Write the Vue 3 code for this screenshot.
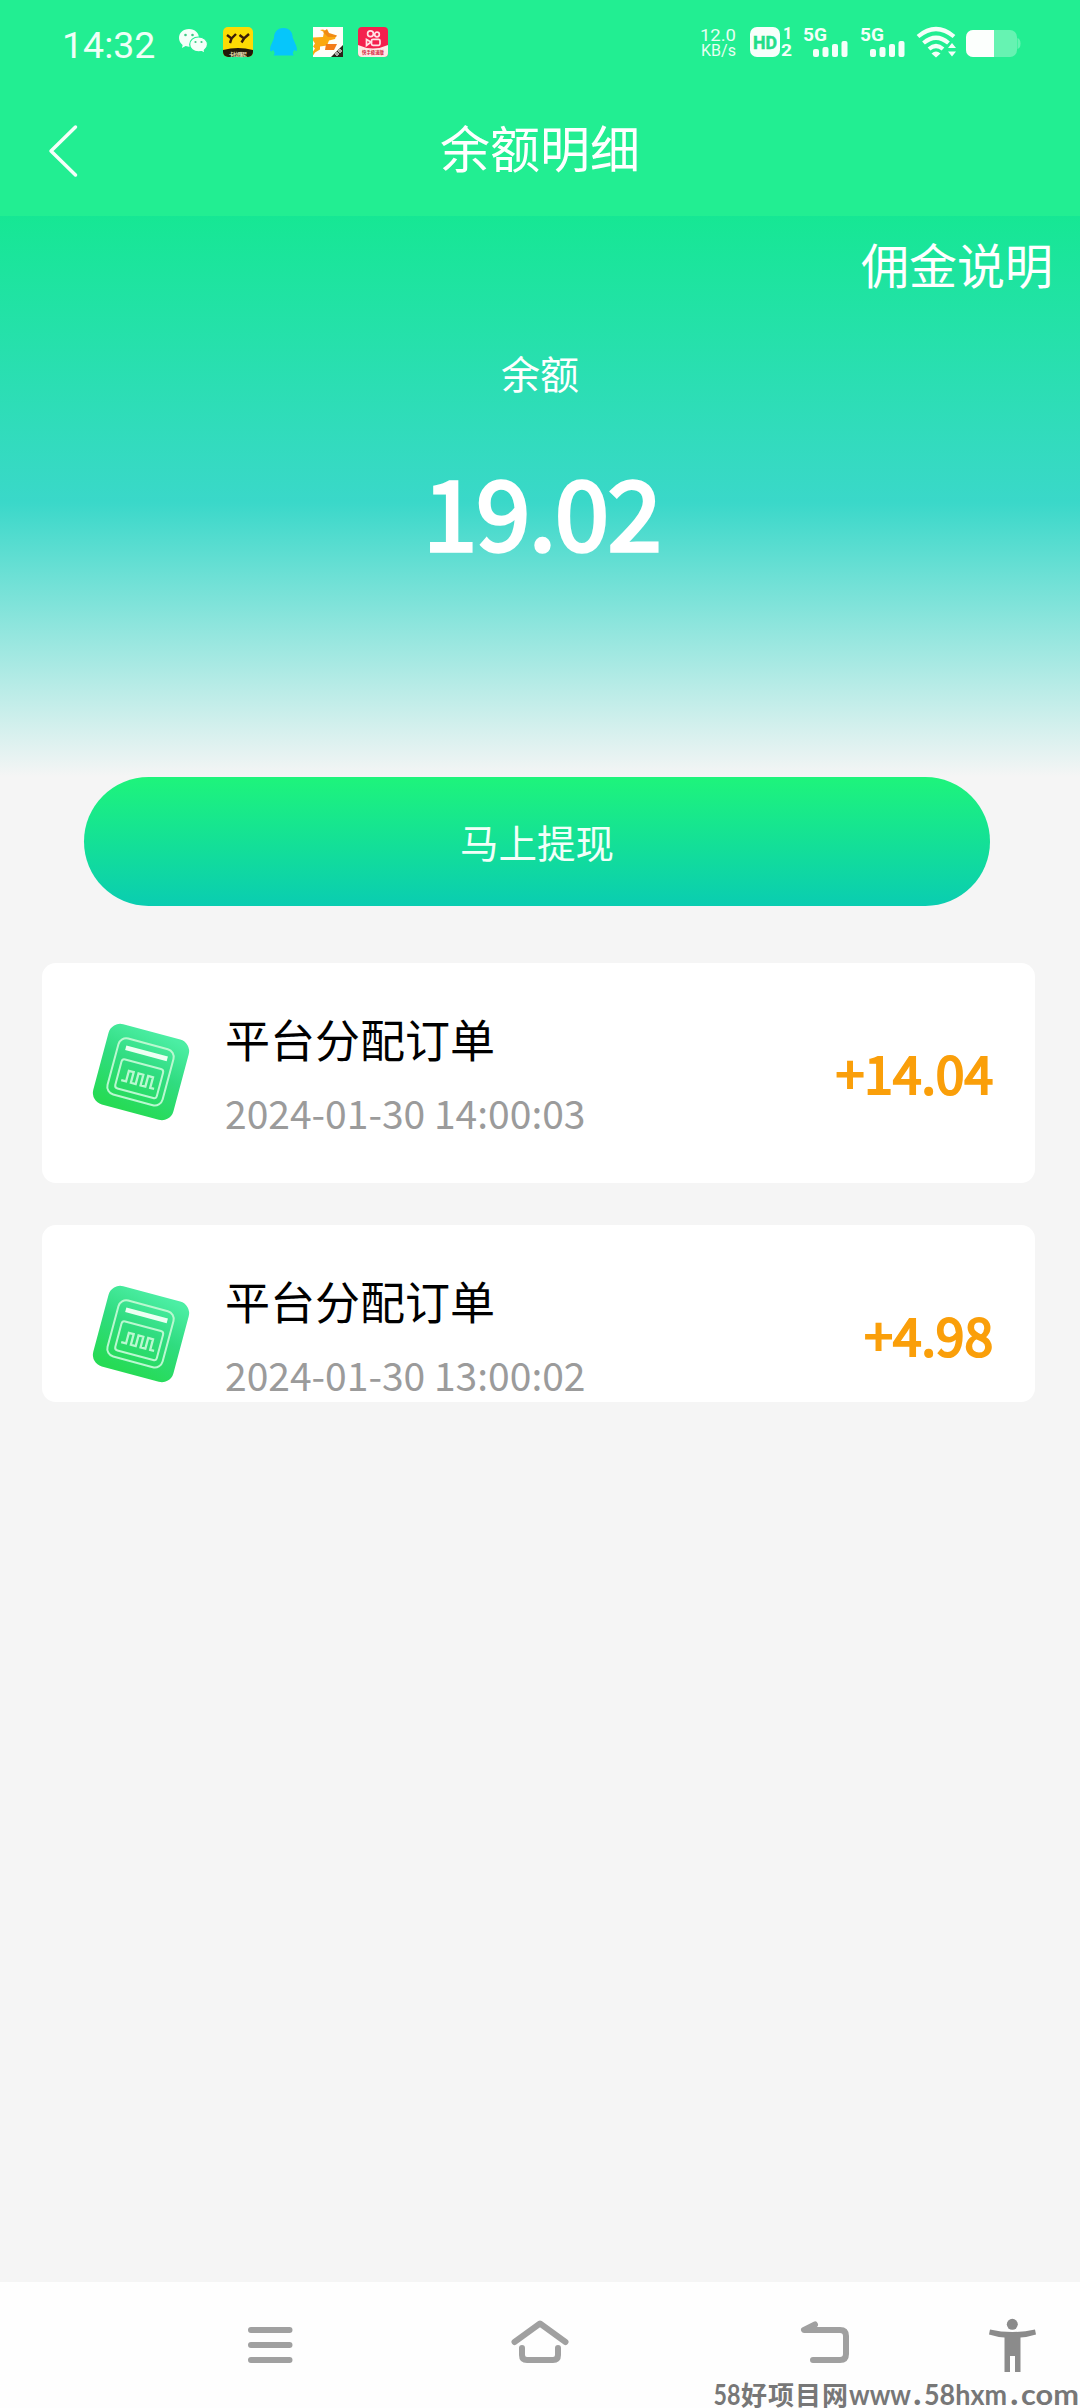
<script setup>
const orders = [
  { title: '平台分配订单', time: '2024-01-30 14:00:03', amount: '+14.04' },
  { title: '平台分配订单', time: '2024-01-30 13:00:02', amount: '+4.98' },
]
</script>

<template>
  <div class="screen">
    <header class="header">
      <div class="status">
        <span class="clock">14:32</span>
        <svg class="apps" width="212" height="32" viewBox="0 0 212 32">
          <!-- chat -->
          <g fill="#f4fff9">
            <path d="M11 3C4.800 3 1 7 1 12c0 3 1.500 5.300 3.600 6.900L4 22l3.600-1.900 3.400.6c6 0 10-4 10-8.700S17 3 11 3z" />
            <path stroke="#22ee92" stroke-width="1.200" d="M20.500 11c-5 0-8.800 3.200-8.800 7.500s3.800 7.400 8.800 7.400l3-.4 3.300 1.500-.5-2.800c2-1.400 3.200-3.300 3.200-5.700 0-4.300-4-7.500-9-7.500z" />
          </g>
          <g fill="#3fca86"><circle cx="7.500" cy="9" r="1.300" /><circle cx="14.500" cy="9" r="1.300" /><circle cx="17.500" cy="16" r="1.100" /><circle cx="23.500" cy="16" r="1.100" /></g>
          <!-- yellow face -->
          <clipPath id="face"><rect x="45" y="1" width="30" height="30" rx="5" /></clipPath>
          <g clip-path="url(#face)">
            <rect x="45" y="1" width="30" height="30" fill="#fddb04" />
            <path d="M45 24q15-4 30 0v8H45z" fill="#21180a" />
            <path d="M49 9l4.500 3.500L58 8M53.500 12.500L52 17M61.500 9l4.500 3.500L71 8M66 12.500l-2.500 4" fill="none" stroke="#3b1c08" stroke-width="2.400" />
          </g>
          <text x="51" y="29.500" font-size="5" font-weight="700" fill="#f4e9bd" textLength="18">卡拉赚尼</text>
          <!-- penguin -->
          <path d="M105.500 2c-6.500 0-9.500 4.500-9.500 10l-2.500 6c-2 4-1.500 7.500-.3 7.500l2-1.500 1.500 3-1 2.500h20l-1-2.500 1.500-3 2 1c1.200 0 1-3.500-1-7.500l-2.500-6c0-5-3-9.500-9.200-9.500z" fill="#06c6fb" />
          <!-- running dog -->
          <rect x="135" y="1" width="30" height="30" fill="#fffefa" />
          <path d="M135 11.500l10-.5 1-5-4-2 3-.5 4 2 1 3 8 1.500-1 3-6 1.500-2 5-7 1v3l-5 3-2 3v-4l2-3-2-2 2-3-2-3z" fill="#fba910" />
          <path d="M145 6l4-3 2 4 8 2.500-1 1.500h-8z" fill="#f08b13" /><path d="M148 18h11l-3 6h-9z" fill="#f37b19" />
          <path d="M165 19v12h-12z" fill="#2a2419" /><g fill="none" stroke="#fff" stroke-width="1"><circle cx="159" cy="28" r="1.300" /><circle cx="162" cy="25" r="1.300" /></g>
          <!-- video camera -->
          <clipPath id="cam"><rect x="180" y="1" width="30" height="30" rx="4" /></clipPath>
          <g clip-path="url(#cam)">
            <rect x="180" y="1" width="30" height="30" fill="#f4204e" />
            <path d="M180 19q15 7 30 0v12h-30z" fill="#ffe9e6" />
          </g>
          <g fill="none" stroke="#ffe3e6" stroke-width="1.700"><circle cx="192.500" cy="7.700" r="2.900" /><circle cx="199" cy="8.500" r="2.300" /><rect x="193.500" y="13.300" width="8.500" height="6" rx="1.500" /><path d="M193 16l-4.500-2.500v6z" /></g>
          <text x="184" y="28" font-size="5" font-weight="700" fill="#d4233e" textLength="22" lengthAdjust="spacingAndGlyphs">快手极速版</text>
        </svg>
        <svg class="signals" width="322" height="34" viewBox="0 0 322 34">
          <g fill="#e6fff3" font-size="17">
            <text x="0" y="15" textLength="36" lengthAdjust="spacingAndGlyphs">12.0</text>
            <text x="1" y="30" font-size="16" textLength="35">KB/s</text>
          </g>
          <rect x="50" y="1" width="30" height="30" rx="7" fill="#f7fffb" />
          <text x="53" y="22.500" font-size="18" font-weight="700" fill="#22dd89" stroke="#22dd89" stroke-width=".5" textLength="24" lengthAdjust="spacingAndGlyphs">HD</text>
          <g fill="#f4fff9" font-weight="700">
            <text x="83" y="13" font-size="16">1</text>
            <text x="81" y="30" font-size="16" textLength="11" lengthAdjust="spacingAndGlyphs">2</text>
            <text x="103" y="15" font-size="19" textLength="24" lengthAdjust="spacingAndGlyphs">5G</text>
            <text x="160" y="15" font-size="19" textLength="24" lengthAdjust="spacingAndGlyphs">5G</text>
          </g>
          <g v-for="x in [113, 170]" :key="x" fill="#f4fff9">
            <rect :x="x" y="23" width="6" height="8" rx="2" /><rect :x="x + 9.500" y="21" width="6" height="10" rx="2" /><rect :x="x + 19" y="18" width="6" height="13" rx="2" /><rect :x="x + 28.500" y="15" width="6" height="16" rx="2" />
          </g>
          <g fill="none" stroke="#f4fff9" stroke-width="4.200">
            <path d="M218 10.500q18-15 36 0M223.500 17q12.500-10.500 25 0M229 23q7-6 14 0" />
          </g>
          <g fill="#f4fff9"><path d="M231.500 27.500q4.500-4 9 0L236 31.500zM248 22l4-5 4 5zM248 25.500l4 5 4-5z" /></g>
          <clipPath id="cell"><rect x="266" y="4" width="51" height="27" rx="7" /></clipPath>
          <g clip-path="url(#cell)"><rect x="266" y="4" width="51" height="27" fill="#66f3b2" /><rect x="266" y="4" width="28" height="27" fill="#fcfffd" /></g>
          <path d="M317.500 12q3 1 3 5.500t-3 5.500z" fill="#66f3b2" />
        </svg>
      </div>
      <div class="titlebar">
        <svg class="back" width="34" height="56" viewBox="0 0 34 56"><path d="M29.500 4L5 28l24.500 24" fill="none" stroke="#f4fff9" stroke-width="3.500" stroke-linecap="round" stroke-linejoin="round" /></svg>
        <h1>余额明细</h1>
      </div>
    </header>

    <section class="balance">
      <a class="rules">佣金说明</a>
      <div class="label">余额</div>
      <div class="total">19.02</div>
    </section>

    <button class="withdraw">马上提现</button>

    <main class="orders">
      <article v-for="order in orders" :key="order.time" class="card">
        <svg class="ticket" width="104" height="104" viewBox="0 0 104 104">
          <defs>
            <linearGradient id="tile" x1=".65" y1="0" x2=".45" y2="1">
              <stop offset="0" stop-color="#4ceea4" /><stop offset=".45" stop-color="#30dc80" /><stop offset="1" stop-color="#26db55" />
            </linearGradient>
          </defs>
          <g transform="rotate(15 52 52)">
            <rect x="10.500" y="10.500" width="83" height="83" rx="12" fill="url(#tile)" />
            <g fill="none" stroke="#baf8d0" stroke-width="2">
              <rect x="23" y="23" width="57" height="58" rx="8" />
              <rect x="30.500" y="44" width="43" height="30" rx="3" />
              <path stroke-width="2.300" d="M35 65h5V54h5v11h5V54h5v11h5V54h5v11h4" />
            </g>
            <path d="M31 32.500h43" stroke="#edfff3" stroke-width="4.800" />
          </g>
        </svg>
        <div class="info">
          <div class="name">{{ order.title }}</div>
          <div class="time">{{ order.time }}</div>
        </div>
        <div class="amount">{{ order.amount }}</div>
      </article>
    </main>

    <nav class="nav">
      <svg width="1080" height="126" viewBox="0 0 1080 126">
        <g fill="none" stroke="#a0a0a0" stroke-width="6" stroke-linecap="round" stroke-linejoin="round">
          <path d="M251 48h38.500M251 63h38.500M251 78h38.500" />
          <path d="M514.500 60L540 41.500 565.500 60M522 66v7q0 5 5 5h26q5 0 5-5v-7" />
          <path d="M815 42.500L804 48h36q6 0 6 6v18q0 6-6 6h-27" />
        </g>
        <g fill="#8b8b8b">
          <circle cx="1012.300" cy="42.300" r="5.500" />
          <path d="M990 47.500q22 5 45 0l1 5q-8 2.500-15.500 3V90H1015V74h-5v16h-5.500V55.500q-7.500-.5-15.500-3z" />
        </g>
        <g class="mark" fill="#777">
          <text x="713.500" y="123" font-size="29" textLength="27" lengthAdjust="spacingAndGlyphs">58</text>
          <text class="cn" x="741" y="123" font-size="26" textLength="107">好项目网</text>
          <text x="849" y="123" font-size="29" textLength="62" lengthAdjust="spacingAndGlyphs">www</text>
          <text x="913" y="123" font-size="36">.</text>
          <text x="924" y="123" font-size="29" textLength="83" lengthAdjust="spacingAndGlyphs">58hxm</text>
          <text x="1010" y="123" font-size="36">.</text>
          <text x="1021" y="123" font-size="29" textLength="58" lengthAdjust="spacingAndGlyphs">com</text>
        </g>
      </svg>
    </nav>
  </div>
</template>

<style>
body { margin: 0; background: #f5f5f5; }
</style>

<style scoped>
.screen {
  width: 1080px;
  height: 2408px;
  display: flex;
  flex-direction: column;
  overflow: hidden;
  background: #f5f5f5;
  color: #fff;
  font-family: "Noto Sans CJK SC", sans-serif;
}
.header { height: 216px; flex: none; background: #22ee92; }
.status {
  height: 86px;
  display: flex;
  align-items: flex-start;
  font-family: Roboto, "Noto Sans CJK SC", sans-serif;
}
.status svg { overflow: visible; }
.clock {
  width: 116px;
  margin: 22px 0 0 62px;
  font-size: 37.500px;
  line-height: 46px;
  color: #effff7;
}
.apps { margin-top: 26px; }
.signals { margin: 26px 0 0 310px; }
.titlebar { position: relative; height: 130px; }
.back { position: absolute; left: 46px; top: 37px; }
h1 {
  margin: 0;
  padding-top: 23px;
  font-size: 50px;
  line-height: 74px;
  font-weight: 400;
  text-align: center;
}
.balance {
  height: 561px;
  flex: none;
  display: flex;
  flex-direction: column;
  align-items: center;
  background: linear-gradient(#16e794, #3ad8c9 51%, #f5f5f5);
}
.rules { align-self: flex-end; margin: 12px 27px 0 0; font-size: 48px; line-height: 70px; }
.label { margin-top: 44px; font-size: 39px; line-height: 60px; }
.total {
  margin-top: 35px;
  font-size: 97px;
  line-height: 144px;
  padding-left: 4px;
  letter-spacing: -1px;
  -webkit-text-stroke: 3.500px #fff;
}
.withdraw {
  width: 906px;
  height: 129px;
  flex: none;
  margin-left: 84px;
  padding: 0;
  border: 0;
  border-radius: 65px;
  background: linear-gradient(#1ef47b, #0acdb1);
  color: #f2fff9;
  font: 38.500px/127px "Noto Sans CJK SC", sans-serif;
}
.orders {
  height: 439px;
  margin: 57px 45px 0 42px;
  display: flex;
  flex-direction: column;
  gap: 42px;
  flex: none;
}
.card {
  height: 220px;
  flex: none;
  box-sizing: border-box;
  padding: 0 42px 0 47px;
  display: flex;
  align-items: flex-start;
  border-radius: 14px;
  background: #fff;
}
.card:last-child { height: 177px; }
.ticket { margin-top: 57px; }
.info { margin-left: 32px; flex: 1; }
.name { margin-top: 43px; font-size: 45px; line-height: 66px; color: #000; }
.time { margin-top: 11px; font-size: 39px; line-height: 58px; color: #9b9b9b; }
.amount {
  margin-top: 71px;
  font-size: 51.500px;
  line-height: 76px;
  color: #fa9f0a;
  -webkit-text-stroke: 2.200px #fa9f0a;
}
.nav { height: 126px; margin-top: auto; flex: none; background: #fefefe; }
.nav svg { display: block; }
.mark { font-family: Lato, sans-serif; font-weight: 700; }
.cn { font-family: "Noto Sans CJK SC", sans-serif; }
</style>
